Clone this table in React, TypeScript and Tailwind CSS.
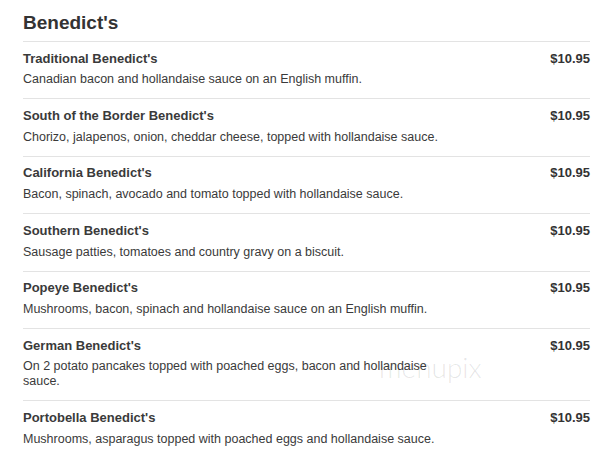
const items = [
  { name: "Traditional Benedict's", desc: "Canadian bacon and hollandaise sauce on an English muffin." },
  { name: "South of the Border Benedict's", desc: "Chorizo, jalapenos, onion, cheddar cheese, topped with hollandaise sauce." },
  { name: "California Benedict's", desc: "Bacon, spinach, avocado and tomato topped with hollandaise sauce." },
  { name: "Southern Benedict's", desc: "Sausage patties, tomatoes and country gravy on a biscuit." },
  { name: "Popeye Benedict's", desc: "Mushrooms, bacon, spinach and hollandaise sauce on an English muffin." },
  { name: "German Benedict's", desc: "On 2 potato pancakes topped with poached eggs, bacon and hollandaise sauce." },
  { name: "Portobella Benedict's", desc: "Mushrooms, asparagus topped with poached eggs and hollandaise sauce." },
]

export default function App() {
  return (
    <div className="relative w-[610px] h-[455px] overflow-hidden bg-white pl-[23px] pr-[20px] pt-[11px] text-[#333] font-['Liberation_Sans',Arial,sans-serif]">
      <h2 className="text-[19px] leading-[24px] font-bold mb-[6px]">Benedict's</h2>
      {items.map((item) => (
        <div key={item.name} className="border-t border-[#e3e3e3] pt-[6.7px] pb-[11px]">
          <div className="flex justify-between items-baseline">
            <span className="text-[13px] leading-[20px] font-bold text-[#3a3a3a]">{item.name}</span>
            <span className="text-[13px] leading-[20px] font-bold">$10.95</span>
          </div>
          <p className="mt-[3.7px] text-[12.5px] leading-[15px] text-[#3a3a3a] max-w-[420px]">{item.desc}</p>
        </div>
      ))}
      <span className="absolute left-[379px] top-[350px] text-[28px] leading-[34px] font-light text-[#000]/10 font-['Lato',sans-serif] pointer-events-none">
        menupix
      </span>
    </div>
  )
}
